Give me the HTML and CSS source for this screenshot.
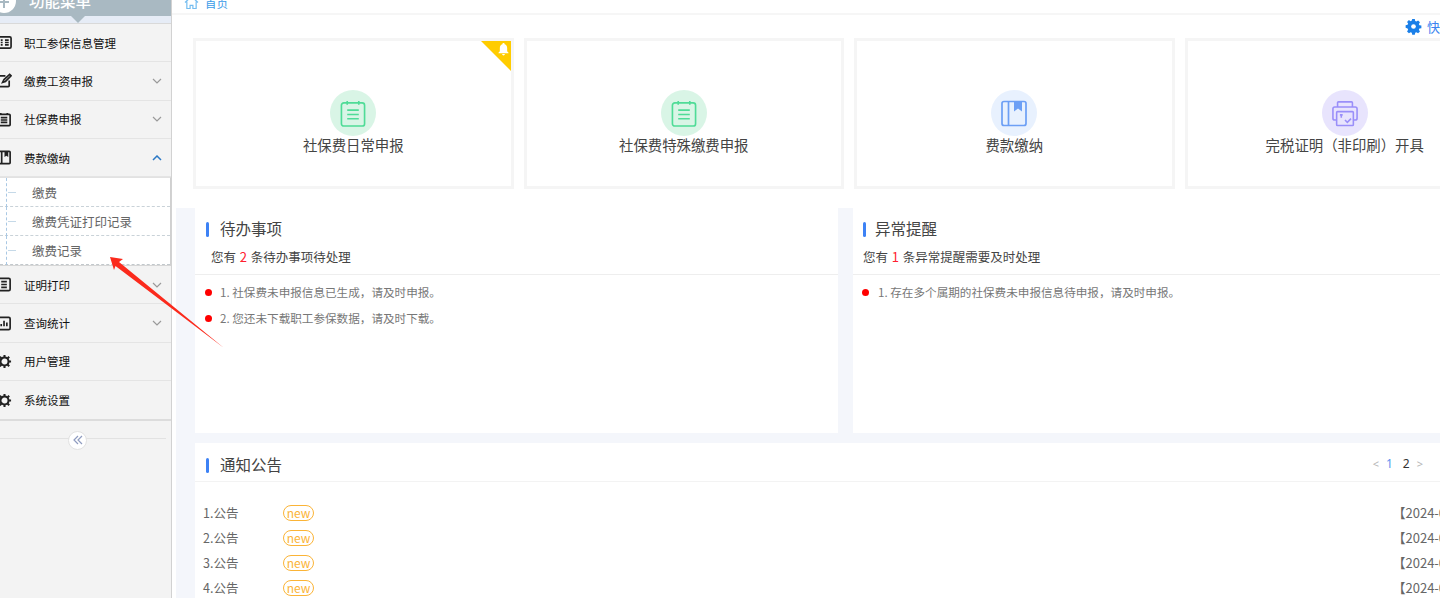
FILE: index.html
```html
<!DOCTYPE html>
<html lang="zh-CN">
<head>
<meta charset="utf-8">
<title>社保费管理</title>
<link rel="stylesheet" href="styles.css">
</head>
<body>
<div class="app">
  <aside class="sidebar">
    <div class="side-head">
      <span class="side-logo"><svg viewBox="0 0 24 24" width="24" height="24"><circle cx="12" cy="12" r="12" fill="#fff"/><path d="M7 9h10M7 13h10M12 5v14" stroke="#a9b9c2" stroke-width="2" fill="none"/></svg></span>
      <span class="side-title">功能菜单</span>
    </div>
    <div class="side-stripe"><i class="caret"></i></div>
    <nav class="menu">
      <div class="item">
        <svg class="mi" viewBox="0 0 16 16"><rect x="1" y="2" width="14" height="12" rx="1.5"/><path d="M4 5.500h2M4 8h2M4 10.500h2M8.500 5.500h4M8.500 8h4M8.500 10.500h4"/></svg>
        <span>职工参保信息管理</span>
      </div>
      <div class="item">
        <svg class="mi" viewBox="0 0 16 16"><path d="M13 8v5.500a1 1 0 0 1-1 1H2a1 1 0 0 1-1-1V4a1 1 0 0 1 1-1h7"/><path d="M6 10l1.500-3 6-5.500 1.500 1.500-6 6z"/></svg>
        <span>缴费工资申报</span>
        <svg class="chev" viewBox="0 0 10 6"><path d="M1 1l4 4 4-4"/></svg>
      </div>
      <div class="item">
        <svg class="mi" viewBox="0 0 16 16"><rect x="1" y="2.500" width="13" height="12" rx="1"/><path d="M4 6h7M4 8.500h7M4 11h7M4 1v2M11 1v2"/></svg>
        <span>社保费申报</span>
        <svg class="chev" viewBox="0 0 10 6"><path d="M1 1l4 4 4-4"/></svg>
      </div>
      <div class="item">
        <svg class="mi" viewBox="0 0 16 16"><rect x="1" y="1.500" width="13" height="13" rx="1"/><path d="M5 1.500v13"/><path class="fill" d="M8 1.500h4v6l-2-1.500-2 1.500z"/></svg>
        <span>费款缴纳</span>
        <svg class="chev up" viewBox="0 0 10 6"><path d="M1 5l4-4 4 4"/></svg>
      </div>
      <ul class="sub">
        <li>缴费</li>
        <li>缴费凭证打印记录</li>
        <li>缴费记录</li>
      </ul>
      <div class="item">
        <svg class="mi" viewBox="0 0 16 16"><rect x="1" y="1.500" width="13" height="13" rx="1.500"/><path d="M4.500 5h6M4.500 8h6M4.500 11h6"/></svg>
        <span>证明打印</span>
        <svg class="chev" viewBox="0 0 10 6"><path d="M1 1l4 4 4-4"/></svg>
      </div>
      <div class="item">
        <svg class="mi" viewBox="0 0 16 16"><rect x="1" y="1.500" width="13" height="13" rx="1.500"/><path d="M4.500 11V8.500M7.500 11V5M10.500 11V7"/></svg>
        <span>查询统计</span>
        <svg class="chev" viewBox="0 0 10 6"><path d="M1 1l4 4 4-4"/></svg>
      </div>
      <div class="item">
        <svg class="mi gear" viewBox="0 0 16 16"><circle cx="8" cy="8" r="4.300"/><path d="M8 1v2.500M8 12.500V15M1 8h2.500M12.500 8H15M3 3l1.800 1.800M11.200 11.200L13 13M13 3l-1.800 1.800M4.800 11.200L3 13"/></svg>
        <span>用户管理</span>
      </div>
      <div class="item last">
        <svg class="mi gear" viewBox="0 0 16 16"><circle cx="8" cy="8" r="4.300"/><path d="M8 1v2.500M8 12.500V15M1 8h2.500M12.500 8H15M3 3l1.800 1.800M11.200 11.200L13 13M13 3l-1.800 1.800M4.800 11.200L3 13"/></svg>
        <span>系统设置</span>
      </div>
    </nav>
    <div class="collapse"><span class="collapse-btn"><svg viewBox="0 0 10 10" width="10" height="10"><path d="M5 1L1 5l4 4M9 1L5 5l4 4"/></svg></span></div>
  </aside>

  <main class="main">
    <div class="crumb">
      <svg class="home" viewBox="0 0 16 14"><path d="M1 7l7-6.500L15 7M3 6v7.500h3.500V10h3v3.500H13V6"/></svg>
      <span>首页</span>
    </div>
    <div class="quick">
      <svg class="quick-gear" viewBox="0 0 16 16"><path d="M6.600 0h2.800l.4 2.100 1.300.6 1.800-1.200 2 2-1.200 1.800.6 1.300 2.100.4v2.800l-2.100.4-.6 1.300 1.200 1.800-2 2-1.800-1.200-1.300.6-.4 2.100H6.600l-.4-2.100-1.300-.6-1.800 1.200-2-2 1.200-1.800-.6-1.300L-.400 9.400V6.600l2.100-.4.600-1.300L1.100 3.100l2-2 1.800 1.200 1.300-.6z"/><circle cx="8" cy="8" r="2.500" fill="#fff"/></svg>
      <span>快捷设置</span>
    </div>
    <section class="cards">
      <a class="card">
        <span class="corner"></span>
        <svg class="bell" viewBox="0 0 12 14"><path d="M6 0a1.200 1.200 0 0 1 1.200 1.400C9.200 2 10 3.600 10 5.500V9l1.500 1.500v.5H.5v-.5L2 9V5.500c0-1.900.8-3.500 2.800-4.100A1.200 1.200 0 0 1 6 0zM4.500 12h3a1.500 1.500 0 0 1-3 0z"/></svg>
        <span class="cicon green"><svg viewBox="0 0 26 28"><rect x="1" y="3" width="24" height="24" rx="2.500"/><path d="M7 1v4M19 1v4M7 10.500h12M7 15h12M7 19.500h12"/></svg></span>
        <span class="clabel">社保费日常申报</span>
      </a>
      <a class="card">
        <span class="cicon green"><svg viewBox="0 0 26 28"><rect x="1" y="3" width="24" height="24" rx="2.500"/><path d="M7 1v4M19 1v4M7 10.500h12M7 15h12M7 19.500h12"/></svg></span>
        <span class="clabel">社保费特殊缴费申报</span>
      </a>
      <a class="card">
        <span class="cicon blue"><svg viewBox="0 0 26 26"><rect x="1" y="1" width="24" height="24" rx="2"/><path d="M7.500 1v24"/><path class="fill" d="M13 1h8v10l-4-3-4 3z"/></svg></span>
        <span class="clabel">费款缴纳</span>
      </a>
      <a class="card">
        <span class="cicon purple"><svg viewBox="0 0 28 28"><path d="M6 7V2.500a1 1 0 0 1 1-1h14a1 1 0 0 1 1 1V7"/><path d="M5 21H3a2 2 0 0 1-2-2V9a2 2 0 0 1 2-2h22a2 2 0 0 1 2 2v10a2 2 0 0 1-2 2h-2"/><rect x="5" y="12" width="18" height="15" rx="1"/><path d="M14 21l2.500 2.500 4-4M8.500 15.500h3M10 15.500v3"/></svg></span>
        <span class="clabel">完税证明（非印刷）开具</span>
      </a>
    </section>
    <div class="lower">
      <section class="panels">
        <div class="panel todo">
          <div class="panel-top">
            <h2 class="ptitle">待办事项</h2>
            <p class="psub indent">您有 <b>2</b> 条待办事项待处理</p>
          </div>
          <ul class="plist">
            <li>1. 社保费未申报信息已生成，请及时申报。</li>
            <li>2. 您还未下载职工参保数据，请及时下载。</li>
          </ul>
        </div>
        <div class="panel alert">
          <div class="panel-top">
            <h2 class="ptitle">异常提醒</h2>
            <p class="psub">您有 <b>1</b> 条异常提醒需要及时处理</p>
          </div>
          <ul class="plist">
            <li>1. 存在多个属期的社保费未申报信息待申报，请及时申报。</li>
          </ul>
        </div>
      </section>
      <section class="notice">
        <div class="nhead">
          <h2 class="ptitle">通知公告</h2>
          <div class="pager"><i>&lt;</i><em>1</em><span>2</span><i>&gt;</i></div>
        </div>
        <ul class="nlist">
          <li><span class="nname">1.公告</span><span class="new">new</span><span class="ndate">【2024-01-01】</span></li>
          <li><span class="nname">2.公告</span><span class="new">new</span><span class="ndate">【2024-01-01】</span></li>
          <li><span class="nname">3.公告</span><span class="new">new</span><span class="ndate">【2024-01-01】</span></li>
          <li><span class="nname">4.公告</span><span class="new">new</span><span class="ndate">【2024-01-01】</span></li>
        </ul>
      </section>
    </div>
  </main>
</div>
<svg class="arrow" viewBox="0 0 120 95" width="120" height="95"><polygon points="1,2 14,4 10,7 115,93 6.500,11 5,15" fill="#fb2a1c"/></svg>
</body>
</html>
```
FILE: styles.css
```css
* { box-sizing: border-box; }
html, body { margin: 0; height: 100%; overflow: hidden; }
body { font-family: "Noto Sans CJK SC", "Noto Sans", sans-serif; background: #fff; color: #333; }
ul { list-style: none; margin: 0; padding: 0; }
h2, p { margin: 0; font-weight: 400; }

.app { display: flex; width: 1440px; height: 598px; overflow: hidden; }

.sidebar { flex: 0 0 172px; background: #f3f3f3; border-right: 1px solid #d2d2d2; overflow: hidden; }
.side-head { height: 16px; background: #a9b9c2; display: flex; align-items: center; gap: 12px; overflow: hidden; color: #fff; }
.side-logo { display: flex; margin-left: -8px; margin-top: -14px; }
.side-logo svg { display: block; }
.side-title { font-size: 15.500px; line-height: 20px; margin-top: -16px; margin-left: 1px; font-weight: 500; }
.side-stripe { height: 7px; background: #e6ecf6; display: flex; justify-content: center; padding-right: 15px; }
.caret { width: 0; height: 0; border-left: 7px solid transparent; border-right: 7px solid transparent; border-top: 7px solid #a9b9c2; }

.menu { border-top: 1px solid #d9d9d9; }
.item { height: 38.300px; display: flex; align-items: center; border-bottom: 1px solid #e4e4e4; font-size: 11.500px; color: #111; position: relative; padding-right: 9px; }
.item.last { height: 39.500px; padding-top: 1px; border-bottom: 2px solid #dcdcdc; }
.mi { flex: 0 0 15px; width: 15px; height: 15px; margin-left: -3px; margin-right: 12px; fill: none; stroke: #222; stroke-width: 1.800; }
.mi.gear { stroke-width: 2.200; }
.mi .fill { fill: #222; stroke: none; }
.chev { width: 10px; height: 6px; margin-left: auto; fill: none; stroke: #9a9a9a; stroke-width: 1.200; }
.chev.up { stroke: #2b78c5; stroke-width: 1.500; }

.sub { background: #fff; border-top: 1px solid #e2e2e2; border-right: 1px solid #d0d0d0; border-bottom: 1px solid #d6d6d6; }
.sub li { height: 29px; padding-left: 32px; display: flex; align-items: center; font-size: 12.500px; color: #666; border-bottom: 1px dashed #c9d2d8; position: relative; }
.sub li:last-child { border-bottom: 1px dashed #c2c8cc; }
.sub li::before { content: ""; position: absolute; left: 6px; top: 0; bottom: -1px; border-left: 1px dashed #a9c8e4; }
.sub li::after { content: ""; position: absolute; left: 8px; top: 14px; width: 8px; border-top: 1px solid #c5d9e8; }

.collapse { margin: 17px 5px 0 0; height: 1px; background: #e2e2e2; position: relative; }
.collapse-btn { position: absolute; left: 68px; top: -7px; width: 19px; height: 19px; border-radius: 50%; background: #fff; border: 1px solid #e2e2e2; display: flex; align-items: center; justify-content: center; }
.collapse-btn svg { fill: none; stroke: #8f9cc0; stroke-width: 1.200; }

.main { flex: 1 0 0; min-width: 0; overflow: hidden; display: flex; flex-direction: column; }
.crumb { height: 15px; flex: none; border-bottom: 2px solid #f6f6f6; display: flex; align-items: center; gap: 6px; padding-left: 12px; font-size: 11.500px; color: #3a9be8; overflow: hidden; }
.crumb span { margin-top: -8px; }
.home { width: 15px; height: 13px; margin-top: -9px; fill: none; stroke: #74bdf0; stroke-width: 1.300; }

.quick { height: 23px; flex: none; display: flex; align-items: center; gap: 5px; padding: 0 0 0 1234px; font-size: 13px; color: #3a85f0; white-space: nowrap; }
.quick-gear { width: 15px; height: 15px; flex: none; fill: #1a7fe8; overflow: visible; }
.quick span { margin-left: 1px; }

.cards { display: flex; gap: 10px; padding-left: 21px; height: 151px; flex: none; }
.card { flex: 0 0 320.500px; height: 151px; border: 3px solid #f5f5f5; display: flex; flex-direction: column; align-items: center; padding-top: 49px; position: relative; background: #fff; }
.corner { position: absolute; right: 0; top: 0; width: 0; height: 0; border-top: 30px solid #ffcc00; border-left: 30px solid transparent; }
.bell { position: absolute; right: 2px; top: 2px; width: 11px; height: 13px; fill: #fff; }
.cicon { width: 46px; height: 46px; border-radius: 50%; display: flex; align-items: center; justify-content: center; flex: none; }
.cicon svg { width: 26px; height: 27px; fill: none; stroke-width: 1.700; }
.green { background: #d9f5e6; }
.green svg { stroke: #4fdc97; }
.blue { background: #e8f1fe; }
.blue svg { stroke: #6c9ff5; }
.blue .fill { fill: #6c9ff5; stroke: none; }
.purple { background: #e8e4fd; }
.purple svg { stroke: #9a8ff9; }
.clabel { font-family: "Noto Sans CJK TC", "Noto Sans CJK SC", sans-serif; font-size: 14.400px; line-height: 18px; color: #444; white-space: nowrap; }

.lower { margin-top: 19px; margin-left: 4px; padding-left: 19px; background: #f4f6fb; flex: 1 0 auto; }
.panels { display: flex; gap: 15px; height: 225px; }
.panel { background: #fff; flex: none; }
.todo { width: 643px; }
.alert { width: 587px; }
.panel-top { height: 67px; border-bottom: 1px solid #eee; padding: 10px 0 0 11px; }
.alert .panel-top { padding-left: 10px; }
.ptitle { font-size: 15.500px; line-height: 20px; color: #444; padding-left: 14px; position: relative; }
.alert .ptitle { padding-left: 12px; }
.ptitle::before { content: ""; position: absolute; left: 0; top: 4px; width: 3px; height: 15px; border-radius: 2px; background: #3d82f5; }
.psub { font-size: 12.500px; line-height: 18px; color: #444; margin-top: 10px; }
.psub.indent { padding-left: 5px; }
.psub b { font-weight: 400; color: #ff2030; font-size: 13px; margin: 0 1px; }
.plist { padding: 4px 0 0 25px; font-family: "Noto Sans CJK TC", "Noto Sans CJK SC", sans-serif; }
.plist li { font-size: 11.600px; line-height: 26px; color: #777; position: relative; white-space: nowrap; }
.plist li::before { content: ""; position: absolute; left: -15px; top: 10px; width: 7px; height: 7px; border-radius: 50%; background: #f00; }
.alert .plist li::before { left: -16px; }

.notice { margin-top: 10px; background: #fff; width: 1245px; height: 300px; }
.nhead { height: 39px; border-bottom: 1px solid #f3f3f3; display: flex; align-items: center; justify-content: space-between; padding: 2px 17px 0 11px; }
.nhead .ptitle { margin-top: 2px; }
.pager { display: flex; align-items: center; gap: 7px; font-size: 12px; color: #333; font-family: "Noto Sans", sans-serif; }
.pager i { font-style: normal; color: #b5b5b5; font-size: 11px; }
.pager em { font-style: normal; color: #5d93ee; margin-right: 3px; }
.nlist { padding: 18px 0 0 8px; }
.nlist li { height: 25px; display: flex; align-items: center; font-size: 12.500px; color: #666; }
.nname { width: 80px; flex: none; }
.new { flex: none; width: 31px; height: 16px; border: 1px solid #fbb437; border-radius: 8px; color: #fbb437; font-size: 12px; line-height: 13px; text-align: center; }
.ndate { margin-left: auto; width: 47.500px; white-space: nowrap; font-size: 13px; }

.arrow { position: absolute; left: 109px; top: 255px; pointer-events: none; }
```
